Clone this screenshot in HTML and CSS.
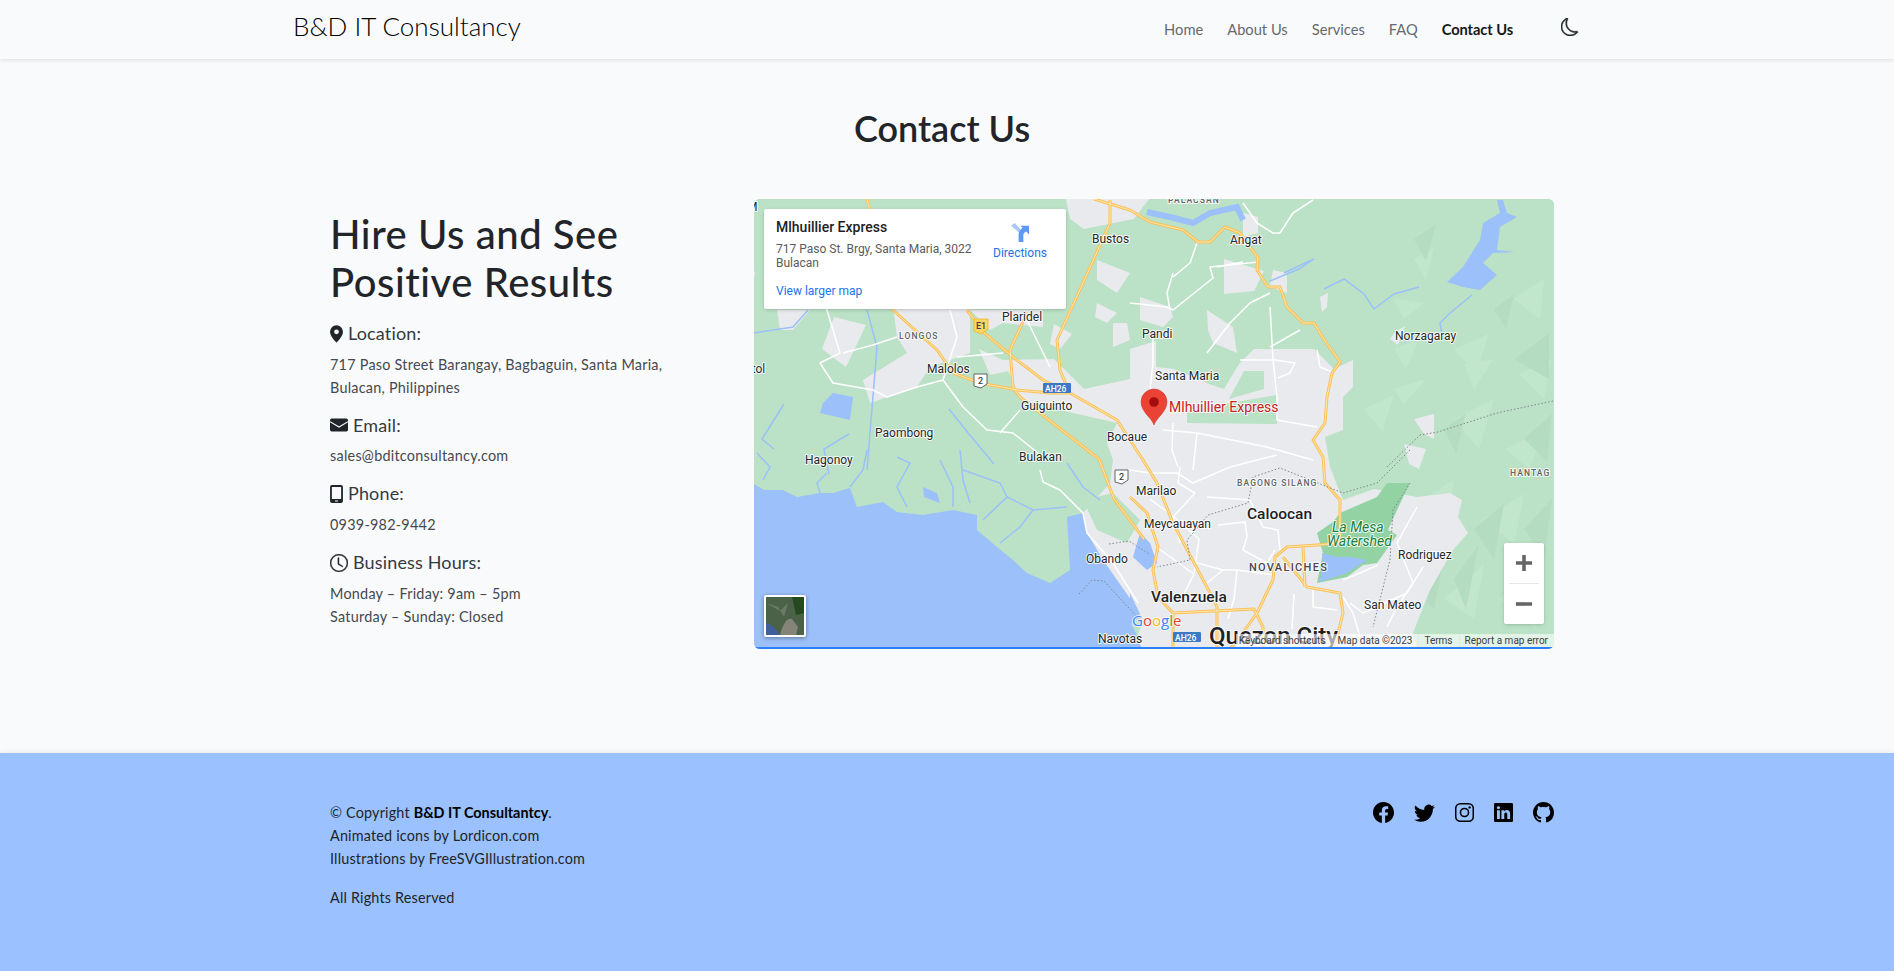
FILE: index.html
```html
<!DOCTYPE html>
<html lang="en">
<head>
<meta charset="utf-8">
<title>Contact Us - B&amp;D IT Consultancy</title>
<link rel="stylesheet" href="styles.css">
</head>
<body>
<header class="navbar">
  <div class="nav-inner">
    <a class="brand" href="#">B&amp;D IT Consultancy</a>
    <nav class="nav-links">
      <a href="#">Home</a>
      <a href="#">About Us</a>
      <a href="#">Services</a>
      <a href="#">FAQ</a>
      <a class="active" href="#">Contact Us</a>
    </nav>
    <svg class="moon" viewBox="0 0 16 16"><path d="M6 .278a.768.768 0 0 1 .08.858 7.208 7.208 0 0 0-.878 3.46c0 4.021 3.278 7.277 7.318 7.277.527 0 1.04-.055 1.533-.16a.787.787 0 0 1 .81.316.733.733 0 0 1-.031.893A8.349 8.349 0 0 1 8.344 16C3.734 16 0 12.286 0 7.71 0 4.266 2.114 1.312 5.124.06A.752.752 0 0 1 6 .278zM4.858 1.311A7.269 7.269 0 0 0 1.025 7.71c0 4.02 3.279 7.276 7.319 7.276a7.316 7.316 0 0 0 5.205-2.162c-.337.042-.68.063-1.029.063-4.61 0-8.343-3.714-8.343-8.29 0-1.167.242-2.278.681-3.286z"/></svg>
  </div>
</header>

<main class="main">
  <h1 class="page-title">Contact Us</h1>
  <div class="contact-grid">
    <section class="info">
      <h2 class="info-title">Hire Us and See<br>Positive Results</h2>
      <h3 class="info-head"><svg class="ico ico-pin" viewBox="2 0 12 16"><path d="M8 16s6-5.686 6-10A6 6 0 0 0 2 6c0 4.314 6 10 6 10zm0-7.800a2.200 2.200 0 1 1 0-4.400 2.200 2.200 0 0 1 0 4.400z"/></svg>Location:</h3>
      <p class="info-text">717 Paso Street Barangay, Bagbaguin, Santa Maria,<br>Bulacan, Philippines</p>
      <h3 class="info-head"><svg class="ico ico-wide" viewBox="0 0 16 16"><path d="M1.500 2.300h13A1.500 1.500 0 0 1 16 3.800v8.400a1.500 1.500 0 0 1-1.500 1.500h-13A1.500 1.500 0 0 1 0 12.200V3.800a1.500 1.500 0 0 1 1.500-1.500z"/><polyline class="ico-cut" points="0,5 8,9.800 16,5"/></svg>Email:</h3>
      <p class="info-text">sales@bditconsultancy.com</p>
      <h3 class="info-head"><svg class="ico ico-pin" viewBox="0 0 10 14"><path class="ico-even" d="M1.500 0h7A1.500 1.500 0 0 1 10 1.500v11A1.500 1.500 0 0 1 8.500 14h-7A1.500 1.500 0 0 1 0 12.500v-11A1.500 1.500 0 0 1 1.500 0zM1.400 1.500v9.300h7.200V1.500zM3.800 12v.8h2.400V12z"/></svg>Phone:</h3>
      <p class="info-text">0939-982-9442</p>
      <h3 class="info-head"><svg class="ico ico-wide ico-bold" viewBox="0 0 16 16"><path d="M8 3.500a.5.5 0 0 0-1 0V9a.5.5 0 0 0 .252.434l3.500 2a.5.5 0 0 0 .496-.868L8 8.710V3.500z"/><path d="M8 16A8 8 0 1 0 8 0a8 8 0 0 0 0 16zm7-8A7 7 0 1 1 1 8a7 7 0 0 1 14 0z"/></svg>Business Hours:</h3>
      <p class="info-text">Monday – Friday: 9am – 5pm<br>Saturday – Sunday: Closed</p>
    </section>

    <section class="map">
      <svg class="map-canvas" viewBox="0 0 800 450" width="800" height="450">
        <rect class="land" width="800" height="450"/>
        <g class="terrain">
          <polygon points="660,60 680,48 672,80"/><polygon points="640,150 665,140 652,170"/><polygon points="700,150 735,135 722,175"/>
          <polygon points="610,210 640,196 628,232"/><polygon points="700,220 740,200 725,250"/><polygon points="670,300 700,280 695,320"/>
          <polygon points="730,320 770,295 760,345"/><polygon points="690,400 730,365 720,420"/><polygon points="745,400 790,365 782,430"/>
          <polygon points="760,100 790,80 786,120"/><polygon points="640,100 670,104 650,120"/><polygon points="640,190 672,180 650,205"/>
          <polygon points="752,250 790,230 775,270"/><polygon points="710,165 740,160 720,190"/><polygon points="765,175 798,160 790,200"/>
        </g>
        <g class="terrain-dark">
          <polygon points="660,40 682,25 672,62"/><polygon points="760,160 795,135 795,180"/><polygon points="720,330 750,305 740,360"/>
          <polygon points="700,380 725,345 712,410"/><polygon points="770,240 798,215 793,262"/><polygon points="690,230 712,214 702,255"/>
          <polygon points="740,110 760,95 752,130"/><polygon points="660,390 690,360 680,410"/><polygon points="770,330 798,300 790,360"/>
        </g>
        <g class="urban">
          <polygon points="376,165 420,170 455,185 470,190 485,165 500,150 560,150 580,170 599,161 599,188 589,198 589,231 571,238 576,268 589,301 620,290 663,298 696,294 708,301 704,318 714,334 699,351 676,391 659,434 663,450 380,450 389,420 379,404 349,361 333,334 329,314 356,284 359,261 353,244 363,224 319,214 267,200 249,161 300,160 330,190 376,180"/>
          <polygon points="139,108 216,108 216,154 176,168 163,188 116,204 109,181 153,154 143,138"/>
          <polygon points="23,111 56,111 39,131 26,131"/>
          <polygon points="216,111 289,111 289,128 249,124 236,131"/>
          <polygon points="312,0 395,0 380,20 330,30 316,20"/>
          <polygon points="343,61 376,74 363,94 343,81"/>
          <polygon points="343,104 363,114 353,124 341,118"/>
          <polygon points="359,124 373,124 376,141 359,148"/>
          <polygon points="386,98 416,108 419,118 409,128 386,121"/>
          <polygon points="376,150 402,142 402,170 376,170"/>
          <polygon points="453,111 479,128 483,154 459,144 454,131"/>
          <polygon points="489,14 504,18 504,34 489,38"/>
          <polygon points="519,71 533,74 533,94 516,88"/>
          <polygon points="566,98 574,94 573,108 568,113"/>
          <polygon points="641,133 651,127 644,146 636,140"/>
          <polygon points="660,220 680,215 680,240 670,235"/>
          <polygon points="650,245 672,250 665,270 655,265"/>
          <polygon points="249,161 225,150 236,176 264,170"/>
          <polygon points="80,118 112,126 92,168 68,150"/>
          <polygon points="300,125 318,135 306,150 296,145"/>
          <polygon points="470,60 510,72 500,92 470,95"/>
        </g>
        <g class="land-top">
          <polygon points="433,213 476,204 523,196 523,225 433,224"/>
          <polygon points="329,301 359,294 386,321 373,344 343,331"/>
          <polygon points="475,200 490,172 510,172 510,190"/>
        </g>
        <polygon class="water" points="0,285 10,291 29,291 43,298 66,294 79,294 96,289 103,308 129,303 143,313 169,316 199,311 223,316 223,331 243,348 259,361 273,374 296,384 316,371 313,318 329,314 333,334 349,361 379,404 386,418 373,428 389,450 0,450"/>
        <g class="water">
          <polygon points="743,1 749,1 753,14 763,18 746,28 743,51 761,53 739,54 729,64 743,76 726,91 709,88 693,83 709,68 726,41 729,24 746,14"/>
          <polygon points="79,194 99,198 96,221 66,214 69,204"/>
          <polygon points="386,334 396,344 403,364 393,371 379,358"/>
          <polygon points="376,394 386,415 376,420"/>
          <polygon points="169,288 183,294 186,304 178,301 170,298"/>
          <polygon points="340,380 372,415 385,440 350,440 360,425"/>
        </g>
        <polygon class="mesa" points="586,314 623,298 633,284 656,284 643,311 634,331 643,336 623,364 609,366 593,378 563,384 569,354 563,334 579,323"/>
        <polygon class="water" points="568,354 583,358 596,358 613,361 593,374 566,383 569,364"/>
        <g class="creek">
          <polyline points="718,96 696,114 686,124 689,141"/>
          <polyline points="0,134 39,128 54,111"/><polyline points="113,111 123,148 113,271"/>
          <polyline points="530,74 560,60 545,70 516,82"/><polyline points="570,90 590,80 610,95 620,110 640,95 665,88"/>
          <polyline points="113,251 109,271 96,288"/><polyline points="143,258 156,264 143,288 153,308"/>
          <polyline points="186,261 199,288 199,308"/><polyline points="206,251 209,281 216,304"/>
          <polyline points="209,271 246,284 253,298 229,321"/><polyline points="253,298 279,311 313,308"/>
          <polyline points="279,311 266,328 246,344"/><polyline points="313,264 329,288 346,301"/>
          <polyline points="9,281 16,268 3,254"/><polyline points="73,274 63,284 66,294"/>
          <polyline points="195,210 215,235 240,265"/><polyline points="30,205 8,240 20,250"/><polyline points="95,235 70,250 75,275"/>
        </g>
        <polyline class="river" points="393,13 416,18 439,24 456,14 483,8 489,21"/>
        <g class="road">
          <polyline points="72,108 86,154 66,164 79,184 119,191 133,198 163,188 189,181 209,208 233,231 259,234 289,258"/>
          <polyline points="89,154 119,146 143,138"/><polyline points="189,181 203,138 196,111"/>
          <polyline points="203,158 249,154"/><polyline points="273,121 296,168"/><polyline points="246,234 266,211"/>
          <polyline points="286,271 289,283 306,291 329,314 333,334 359,364 384,404"/>
          <polyline points="376,104 413,108 419,111 459,79 456,68 504,63"/>
          <polyline points="399,138 399,164 396,191"/>
          <polyline points="453,154 476,124 496,104 516,94"/>
          <polyline points="516,108 519,161 523,198 523,221 563,228"/>
          <polyline points="516,148 546,131"/><polyline points="563,151 566,168 578,173"/>
          <polyline points="486,161 521,161 541,164 536,174 524,179"/>
          <polyline points="419,74 413,94 416,111"/><polyline points="443,44 436,64 419,78"/>
          <polyline points="463,68 489,63"/><polyline points="409,231 443,234 513,248 559,261"/>
          <polyline points="443,234 439,271"/><polyline points="419,224 418,251 424,268"/>
          <polyline points="526,34 539,14 559,1"/><polyline points="489,4 503,24 519,34 526,34"/>
          <polyline points="376,271 396,274 423,274 439,284 476,268 523,256"/>
          <polyline points="426,268 424,284 441,294 419,318 426,344"/>
          <polyline points="453,298 496,301 509,328 524,331 526,351"/>
          <polyline points="464,326 491,323 493,338 489,351 513,364 521,351"/>
          <polyline points="443,364 469,371 453,384"/><polyline points="483,371 519,376"/>
          <polyline points="469,371 483,371 480,400 474,420"/>
          <polyline points="596,404 609,414 653,394 669,368"/>
          <polyline points="663,308 643,344 659,384 643,408 633,428"/>
          <polyline points="589,381 606,374 624,366"/><polyline points="589,398 599,414 606,438"/>
          <polyline points="559,391 559,408 583,411"/>
          <polyline points="396,300 420,318 445,340 440,375 430,395"/>
          <polyline points="540,395 538,430"/><polyline points="405,350 440,375"/>
          <polyline points="20,110 40,85"/>
        </g>
        <g class="road-y">
          <g id="yl">
            <polyline points="213,111 229,133 259,158 289,181 316,194 363,221 389,261 403,284 419,324 456,394 463,408 463,450"/>
            <polyline points="356,1 356,24 329,84 303,141 306,171 313,188"/>
            <polyline points="273,114 256,151 259,188 266,198"/>
            <polyline points="199,174 226,184 263,191 296,194 316,194"/>
            <polyline points="113,0 118,20 139,111 183,151 199,174"/>
            <polyline points="266,198 300,225 345,260 360,300 390,340"/>
            <polyline points="376,11 396,23 429,31 444,43 456,43 471,28 486,34 504,59 503,71 514,88 526,88 533,108 549,124 560,124 569,139 586,163 578,174 573,198 571,224 559,241 569,258 571,284 586,301 586,344 563,346 533,348 521,358 519,381 503,414 486,438 476,450"/>
            <polyline points="529,358 553,388 586,394 589,414 583,438 578,450"/>
            <polyline points="549,348 551,388"/>
            <polyline points="340,0 376,11"/>
            <polyline points="376,298 393,314 404,348 399,371 404,398 419,414 500,410 509,428 509,450"/>
            <polyline points="419,414 419,450"/>
          </g>
        </g>
        <use class="road-y-in" href="#yl"/>
        <g class="dots">
          <polyline points="633,268 666,236 684,233 743,214 799,202"/>
          <polyline points="656,251 623,284 589,294 526,269 499,278 494,304 454,316 433,341 436,361 403,368"/>
          <polyline points="656,284 639,311 636,361 619,428"/>
          <polyline points="325,395 338,381 350,382 385,420"/>
          <polyline points="355,345 375,342 395,355"/>
        </g>
        <g class="shield-blue">
          <rect x="289" y="184" width="28" height="10" rx="1"/><rect x="419" y="433" width="28" height="10" rx="1"/>
        </g>
        <path class="shield-yellow" d="M220 120h14v10l-7 5-7-3z"/>
        <g class="shield-white">
          <path d="M220 175h13v10l-6 4-7-2z"/><path d="M361 271h13v10l-6 4-7-2z"/>
        </g>
        <g class="lbl-shield">
          <text class="t-e1" x="222" y="130">E1</text>
          <text class="t-2" x="224" y="185">2</text><text class="t-2" x="365" y="281">2</text>
          <text class="t-ah" x="291" y="192.500">AH26</text><text class="t-ah" x="421" y="441.500">AH26</text>
        </g>
        <g class="lbl">
          <text x="-7" y="12">M</text><text x="-13" y="78">eb</text><text x="-9" y="174">ntol</text>
          <text x="338" y="44">Bustos</text><text x="476" y="45">Angat</text><text x="248" y="122">Plaridel</text>
          <text x="388" y="139">Pandi</text><text x="641" y="141">Norzagaray</text><text x="401" y="181">Santa Maria</text>
          <text x="173" y="174">Malolos</text><text x="267" y="211">Guiguinto</text><text x="121" y="238">Paombong</text>
          <text x="353" y="242">Bocaue</text><text x="51" y="265">Hagonoy</text><text x="265" y="262">Bulakan</text>
          <text x="382" y="296">Marilao</text><text x="390" y="329">Meycauayan</text><text x="644" y="360">Rodriguez</text>
          <text x="610" y="410">San Mateo</text><text x="332" y="364">Obando</text><text x="344" y="444">Navotas</text>
        </g>
        <g class="lbl-small">
          <text x="414" y="4">PALACSAN</text><text x="145" y="140">LONGOS</text><text x="483" y="287">BAGONG SILANG</text><text x="756" y="277">HANTAG</text>
        </g>
        <text class="lbl-nov" x="495" y="372">NOVALICHES</text>
        <text class="lbl-big" x="493" y="320">Caloocan</text>
        <text class="lbl-big" x="397" y="403">Valenzuela</text>
        <text class="lbl-huge" x="455" y="445">Quezon City</text>
        <text class="lbl-green" x="578" y="333">La Mesa</text>
        <text class="lbl-green" x="573" y="347">Watershed</text>
        <text class="lbl-marker" x="415" y="213">Mlhuillier Express</text>
        <path class="pin" d="M400 226c-2-7-13-13-13-23a13 13 0 0 1 26 0c0 10-11 16-13 23z"/>
        <circle class="pin-dot" cx="400" cy="203" r="4.800"/>
        <text class="google" x="378" y="427"><tspan class="g-b">G</tspan><tspan class="g-r">o</tspan><tspan class="g-y">o</tspan><tspan class="g-b">g</tspan><tspan class="g-g">l</tspan><tspan class="g-r">e</tspan></text>
      </svg>

      <div class="place-card">
        <div class="place-body">
          <div class="place-name">Mlhuillier Express</div>
          <div class="place-addr">717 Paso St. Brgy, Santa Maria, 3022 Bulacan</div>
          <a class="place-link" href="#">View larger map</a>
        </div>
        <a class="directions" href="#">
          <svg class="dir-ico" viewBox="0 0 20 20"><path class="dir-a" d="M0 3l4-3 7 8v4z"/><path class="dir-b" d="M8 20v-8c0-3 2-5 4-7l-2-2h9v9l-3-3c-2 1-3 2-3 4v7z"/></svg>
          <span>Directions</span>
        </a>
      </div>

      <div class="zoom-ctl">
        <button class="zoom-btn"><svg viewBox="0 0 20 20" class="zoom-ico"><path d="M1 8h7V1h4v7h7v4h-7v7H8v-7H1z"/></svg></button>
        <span class="zoom-sep"></span>
        <button class="zoom-btn"><svg viewBox="0 0 20 20" class="zoom-ico"><path d="M1 8h18v4H1z"/></svg></button>
      </div>

      <div class="sat-thumb">
        <svg viewBox="0 0 38 38" width="38" height="38"><rect width="38" height="38" fill="#4b6148"/><path d="M26 0h12v16l-8 2z" fill="#24491f"/><path d="M0 26c6 1 10 6 14 12H0z" fill="#41609a"/><path d="M14 38c2-8 6-18 12-16l6 8-2 8z" fill="#858479"/><path d="M0 6l12 4 6 10 4-14-8 8z" fill="#6a7a66"/></svg>
      </div>

      <div class="attrib">
        <span class="attrib-cell attrib-first">Keyboard shortcuts</span>
        <span class="attrib-cell">Map data ©2023</span>
        <span class="attrib-cell attrib-line">Terms</span>
        <span class="attrib-cell attrib-line">Report a map error</span>
      </div>
    </section>
  </div>
</main>

<footer class="footer">
  <div class="footer-inner">
    <div class="footer-text">
      <p>© Copyright <strong>B&amp;D IT Consultantcy</strong>.<br>Animated icons by Lordicon.com<br>Illustrations by FreeSVGIllustration.com</p>
      <p>All Rights Reserved</p>
    </div>
    <div class="socials">
      <svg viewBox="0 0 16 16"><path d="M16 8.049c0-4.446-3.582-8.050-8-8.050C3.580 0-.002 3.603-.002 8.050c0 4.017 2.926 7.347 6.750 7.951v-5.625h-2.030V8.050H6.750V6.275c0-2.017 1.195-3.131 3.022-3.131.876 0 1.791.157 1.791.157v1.980h-1.009c-.993 0-1.303.621-1.303 1.258v1.510h2.218l-.354 2.326H9.250V16c3.824-.604 6.750-3.934 6.750-7.951z"/></svg>
      <svg viewBox="0 0 16 16"><path d="M5.026 15c6.038 0 9.341-5.003 9.341-9.334 0-.14 0-.282-.006-.422A6.685 6.685 0 0 0 16 3.542a6.658 6.658 0 0 1-1.889.518 3.301 3.301 0 0 0 1.447-1.817 6.533 6.533 0 0 1-2.087.793A3.286 3.286 0 0 0 7.875 6.030a9.325 9.325 0 0 1-6.767-3.429 3.289 3.289 0 0 0 1.018 4.382A3.323 3.323 0 0 1 .64 6.575v.045a3.288 3.288 0 0 0 2.632 3.218 3.203 3.203 0 0 1-.865.115 3.230 3.230 0 0 1-.614-.057 3.283 3.283 0 0 0 3.067 2.277A6.588 6.588 0 0 1 .78 13.580a6.320 6.320 0 0 1-.78-.045A9.344 9.344 0 0 0 5.026 15z"/></svg>
      <svg class="soc-ig" viewBox="0 0 16 16"><rect class="ig-line" x=".6" y=".6" width="14.800" height="14.800" rx="4"/><circle class="ig-line" cx="8" cy="8" r="3.400"/><circle cx="12.300" cy="3.700" r="1"/></svg>
      <svg class="soc-in" viewBox="0 0 16 16"><path d="M0 1.146C0 .513.526 0 1.175 0h13.650C15.474 0 16 .513 16 1.146v13.708c0 .633-.526 1.146-1.175 1.146H1.175C.526 16 0 15.487 0 14.854V1.146zm4.943 12.248V6.169H2.542v7.225h2.401zm-1.200-8.212c.837 0 1.358-.554 1.358-1.248-.015-.709-.520-1.248-1.342-1.248-.822 0-1.359.540-1.359 1.248 0 .694.521 1.248 1.327 1.248h.016zm4.908 8.212V9.359c0-.216.016-.432.080-.586.173-.431.568-.878 1.232-.878.869 0 1.216.662 1.216 1.634v3.865h2.401V9.250c0-2.220-1.184-3.252-2.764-3.252-1.274 0-1.845.700-2.165 1.193v.025h-.016a5.540 5.540 0 0 1 .016-.025V6.169h-2.400c.030.678 0 7.225 0 7.225h2.400z"/></svg>
      <svg viewBox="0 0 16 16"><path d="M8 0C3.580 0 0 3.580 0 8c0 3.540 2.290 6.530 5.470 7.590.4.070.550-.170.550-.380 0-.190-.010-.820-.010-1.490-2.010.370-2.530-.490-2.690-.940-.090-.230-.480-.940-.820-1.130-.280-.150-.680-.520-.010-.530.630-.010 1.080.580 1.230.820.720 1.210 1.870.870 2.330.660.070-.520.280-.870.510-1.070-1.780-.200-3.640-.890-3.640-3.950 0-.870.310-1.590.820-2.150-.080-.200-.360-1.020.080-2.120 0 0 .670-.210 2.200.820.640-.180 1.320-.270 2-.270.680 0 1.360.090 2 .270 1.530-1.040 2.200-.820 2.200-.820.440 1.100.160 1.920.080 2.120.510.560.820 1.270.820 2.150 0 3.070-1.870 3.750-3.650 3.950.290.250.540.730.540 1.480 0 1.070-.010 1.930-.010 2.200 0 .210.150.460.550.380A8.012 8.012 0 0 0 16 8c0-4.420-3.580-8-8-8z"/></svg>
    </div>
  </div>
</footer>
</body>
</html>
```
FILE: styles.css
```css
* { box-sizing: border-box; }
html, body { margin: 0; padding: 0; }
body {
  min-height: 971px;
  display: flex;
  flex-direction: column;
  background: #f9fafc;
  color: #212529;
  font-family: "Lato", "Noto Sans", sans-serif;
  font-size: 14.4px;
  line-height: 23.04px;
  overflow-x: hidden;
}
a { text-decoration: none; color: inherit; }

/* Navbar */
.navbar {
  height: 59px;
  background: #f9fafc;
  box-shadow: 0 1px 4px rgba(0, 0, 0, .12);
  position: relative;
  z-index: 2;
}
.nav-inner {
  width: 1320px;
  margin-left: 281px;
  height: 59px;
  padding: 0 22px 0 12px;
  display: flex;
  align-items: center;
}
.brand {
  font-size: 26px;
  font-weight: 300;
  color: #000;
  line-height: 30px;
  margin-top: -7px;
  margin-right: auto;
}
.nav-links {
  display: flex;
  gap: 24px;
  font-size: 14.7px;
  color: #666a6e;
  margin-right: 48px;
}
.nav-links .active { color: #16181a; font-weight: 700; letter-spacing: -.1px; }
.moon { width: 18px; height: 18px; fill: #212529; stroke: #212529; stroke-width: .4; margin-top: -5px; }

/* Main */
.main { flex: 1; padding: 0 340px 104px 330px; }
.page-title {
  margin: 46px 0 47px;
  text-align: center;
  font-size: 36px;
  line-height: 47px;
  font-weight: 600;
  color: #212529;
}
.contact-grid { display: grid; grid-template-columns: 424px 800px; }
.info { padding-top: 11px; }
.info-title {
  margin: 0 0 17px;
  font-size: 40px;
  line-height: 48px;
  font-weight: 500;
  letter-spacing: .55px;
  color: #212529;
}
.info-head {
  margin: 0 0 8px;
  display: flex;
  align-items: center;
  gap: 5px;
  font-size: 18px;
  line-height: 21.6px;
  font-weight: 400;
  letter-spacing: .15px;
  color: #343a40;
}
.ico { height: 18px; width: 18px; fill: #212529; flex: none; }
.ico-pin { width: 13px; }
.ico-cut { fill: none; stroke: #f9fafc; stroke-width: 1; }
.ico-even { fill-rule: evenodd; }
.ico-bold { stroke: #212529; stroke-width: .35; }
.info-text { margin: 0 0 16px; color: #45494e; letter-spacing: .25px; }

/* Map */
.map {
  position: relative;
  width: 800px;
  height: 450px;
  overflow: hidden;
  border-radius: 6px;
  background: #bbe2c6;
  font-family: "Roboto", "Liberation Sans", sans-serif;
}
.map::after {
  content: "";
  position: absolute;
  left: 0;
  right: 0;
  bottom: 0;
  height: 2px;
  background: #2a7fff;
}
.map-canvas { display: block; }
.land, .land-top polygon { fill: #bbe2c6; }
.terrain polygon { fill: #c2e6cc; }
.terrain-dark polygon { fill: #b4dcc0; }
.urban polygon { fill: #e8eaed; }
.water, .water polygon { fill: #9cc0f9; }
.mesa { fill: #93d2a3; }
.creek polyline { fill: none; stroke: #9cc0f9; stroke-width: 1.5; }
.river { fill: none; stroke: #9cc0f9; stroke-width: 6; }
.road polyline { fill: none; stroke: #fff; stroke-width: 1.5; stroke-linejoin: round; }
.road-y, .road-y-in { fill: none; stroke-linejoin: round; }
.road-y { stroke: #fcc157; stroke-width: 3; }
.road-y-in { stroke: #fff0c4; stroke-width: .8; }
.dots polyline { fill: none; stroke: #80868b; stroke-width: 1; stroke-dasharray: 1.5 2; }
.shield-blue rect { fill: #3b78c6; }
.shield-yellow { fill: #fdd663; stroke: #e8b923; stroke-width: .8; }
.shield-white path { fill: #fff; stroke: #5f6368; stroke-width: 1; }
.t-e1 { font: 500 9px "Roboto", sans-serif; fill: #3c4043; }
.t-2 { font: 500 9px "Roboto", sans-serif; fill: #3c4043; }
.t-ah { font: 500 8.5px "Roboto", sans-serif; fill: #fff; }
.lbl text, .lbl-small text, .lbl-nov, .lbl-big, .lbl-huge, .lbl-green, .lbl-marker {
  paint-order: stroke;
  stroke: rgba(255, 255, 255, .85);
  stroke-width: 2px;
  stroke-linejoin: round;
}
.lbl text { font: 400 12px "Roboto", sans-serif; fill: #24272a; }
.lbl-small text { font: 500 8.5px "Roboto", sans-serif; letter-spacing: 1.1px; fill: #5f6368; }
.lbl-nov { font: 500 11px "Roboto", sans-serif; letter-spacing: 1.3px; fill: #44484c; }
.lbl-big { font: 500 15.5px "Roboto", sans-serif; fill: #202124; }
.lbl-huge { font: 500 24px "Roboto", sans-serif; fill: #202124; }
.lbl-green { font: italic 400 14px "Roboto", sans-serif; fill: #188038; }
.lbl-marker { font: 400 14px "Roboto", sans-serif; fill: #c5221f; }
.pin { fill: #ea4335; stroke: #c5332a; stroke-width: .5; }
.pin-dot { fill: #a50e0e; }
.google { font: 500 15px "Open Sans", sans-serif; paint-order: stroke; stroke: rgba(255, 255, 255, .7); stroke-width: 2px; }
.g-b { fill: #4285f4; } .g-r { fill: #ea4335; } .g-y { fill: #fbbc04; } .g-g { fill: #34a853; }

.place-card {
  position: absolute;
  left: 10px;
  top: 10px;
  width: 302px;
  height: 100px;
  padding: 9px 10px 0 12px;
  display: flex;
  background: #fff;
  border-radius: 2px;
  box-shadow: 0 1px 4px -1px rgba(0, 0, 0, .3);
}
.place-body { width: 206px; }
.place-name { font-size: 14px; font-weight: 500; line-height: 18px; color: #202124; }
.place-addr { margin-top: 6px; font-size: 12px; line-height: 14px; color: #5b5b5b; }
.place-link { display: block; margin-top: 14px; font-size: 12px; line-height: 14px; color: #1a73e8; }
.directions {
  margin: 5px 0 0 5px;
  width: 66px;
  display: flex;
  flex-direction: column;
  align-items: center;
  font-size: 12px;
  line-height: 14px;
  color: #1a73e8;
}
.dir-ico { width: 19px; height: 19px; margin-bottom: 4px; }
.dir-a { fill: #a8c7fa; }
.dir-b { fill: #5e97f6; }

.zoom-ctl {
  position: absolute;
  right: 10px;
  top: 344px;
  width: 40px;
  height: 81px;
  background: #fff;
  border-radius: 2px;
  box-shadow: 0 1px 4px -1px rgba(0, 0, 0, .3);
}
.zoom-btn { display: flex; width: 40px; height: 40px; padding: 0; border: 0; background: none; align-items: center; justify-content: center; }
.zoom-ico { width: 18px; height: 18px; fill: #666; }
.zoom-sep { display: block; height: 1px; margin: 0 5px; background: #e6e6e6; }

.sat-thumb {
  position: absolute;
  left: 10px;
  top: 396px;
  width: 42px;
  height: 42px;
  border: 2px solid #fff;
  border-radius: 2px;
  box-shadow: 0 1px 4px rgba(0, 0, 0, .4);
}
.sat-thumb svg { display: block; }

.attrib {
  position: absolute;
  right: 0;
  bottom: 1px;
  height: 14px;
  display: flex;
  align-items: center;
  font-size: 10px;
  line-height: 14px;
  color: #3c4043;
  background: rgba(255, 255, 255, .6);
}
.attrib-cell { padding: 0 6px; white-space: nowrap; }
.attrib-first { padding-left: 3px; }
.attrib-line { border-left: 1px solid #e6e6e6; padding-left: 5px; }

/* Footer */
.footer {
  height: 218px;
  background: #9bc2ff;
  box-shadow: 0 -1px 6px rgba(0, 0, 0, .06);
  color: #212529;
}
.footer-inner {
  width: 1224px;
  margin-left: 330px;
  padding-top: 48px;
  display: flex;
  justify-content: space-between;
}
.footer-text { letter-spacing: .18px; }
.footer-text p { margin: 0 0 16px; }
.footer-text strong { font-weight: 700; color: #000; letter-spacing: 0; }
.socials { display: flex; gap: 20px; align-items: flex-start; margin-top: 1px; }
.socials svg { width: 21px; height: 21px; fill: #000; display: block; }
.socials .soc-ig { width: 19px; }
.socials .soc-in { width: 19px; }
.ig-line { fill: none; stroke: #000; stroke-width: 1.300; }
```
